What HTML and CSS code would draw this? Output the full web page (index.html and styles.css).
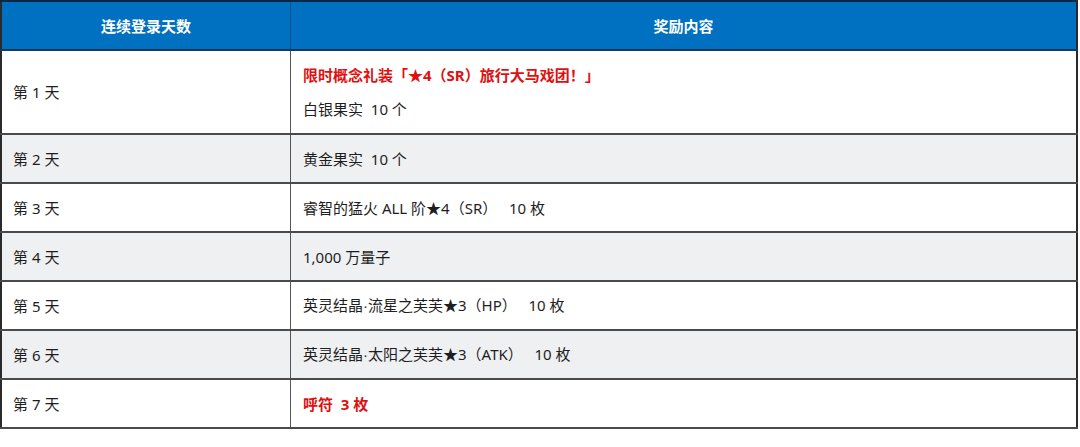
FILE: index.html
```html
<!DOCTYPE html>
<html lang="zh-CN">
<head>
<meta charset="utf-8">
<link rel="stylesheet" href="styles.css">
</head>
<body>
<table class="login-table">
  <thead>
    <tr>
      <th class="col-day">连续登录天数</th>
      <th class="col-reward">奖励内容</th>
    </tr>
  </thead>
  <tbody>
    <tr class="row-tall">
      <td>第 1 天</td>
      <td>
        <div class="line red">限时概念礼装「★4（SR）旅行大马戏团！」</div>
        <div class="line">白银果实&nbsp;&nbsp;10 个</div>
      </td>
    </tr>
    <tr class="alt"><td>第 2 天</td><td>黄金果实&nbsp;&nbsp;10 个</td></tr>
    <tr><td>第 3 天</td><td>睿智的猛火 ALL 阶★4（SR）&nbsp;&nbsp;&nbsp;10 枚</td></tr>
    <tr class="alt"><td>第 4 天</td><td>1,000 万量子</td></tr>
    <tr><td>第 5 天</td><td>英灵结晶<span class="dot">·</span>流星之芙芙★3（HP）&nbsp;&nbsp;&nbsp;10 枚</td></tr>
    <tr class="alt"><td>第 6 天</td><td>英灵结晶<span class="dot">·</span>太阳之芙芙★3（ATK）&nbsp;&nbsp;&nbsp;10 枚</td></tr>
    <tr><td>第 7 天</td><td><span class="red">呼符&nbsp;&nbsp;3 枚</span></td></tr>
  </tbody>
</table>
</body>
</html>
```

FILE: styles.css
```css
html, body {
  margin: 0;
  padding: 0;
  background: #ffffff;
}

body {
  font-family: "Noto Sans", "Noto Sans CJK SC", "Liberation Sans", sans-serif;
  font-size: 15px;
  color: #1e1e1e;
}

.login-table {
  width: 1078px;
  border-collapse: collapse;
  table-layout: fixed;
  border-top: 2px solid #0b2746;
  border-left: 2px solid #2a2a2a;
  border-right: 2px solid #2a2a2a;
  border-bottom: 2px solid #3a3a3a;
}

.login-table th {
  background: #0070c0;
  color: #ffffff;
  font-weight: bold;
  font-size: 15px;
  height: 47px;
  padding: 0;
  text-align: center;
  border-bottom: 2px solid #163a5e;
  border-right: 1px solid #0d4f8a;
}

.col-day {
  width: 288px;
}

.login-table td {
  height: 47px;
  padding: 0 0 0 12px;
  vertical-align: middle;
  border-bottom: 2px solid #4a4a4a;
  border-right: 1px solid #555555;
  line-height: 20px;
}

.login-table td:first-child {
  padding-left: 11px;
}

.login-table tr.alt td {
  background: #eef0f2;
}

.row-tall td {
  height: 82px;
}

.line {
  line-height: 20px;
}

.line + .line {
  margin-top: 14px;
}

.dot {
  font-family: "Liberation Sans", sans-serif;
}

.red {
  color: #e01010;
  font-weight: bold;
}
```
